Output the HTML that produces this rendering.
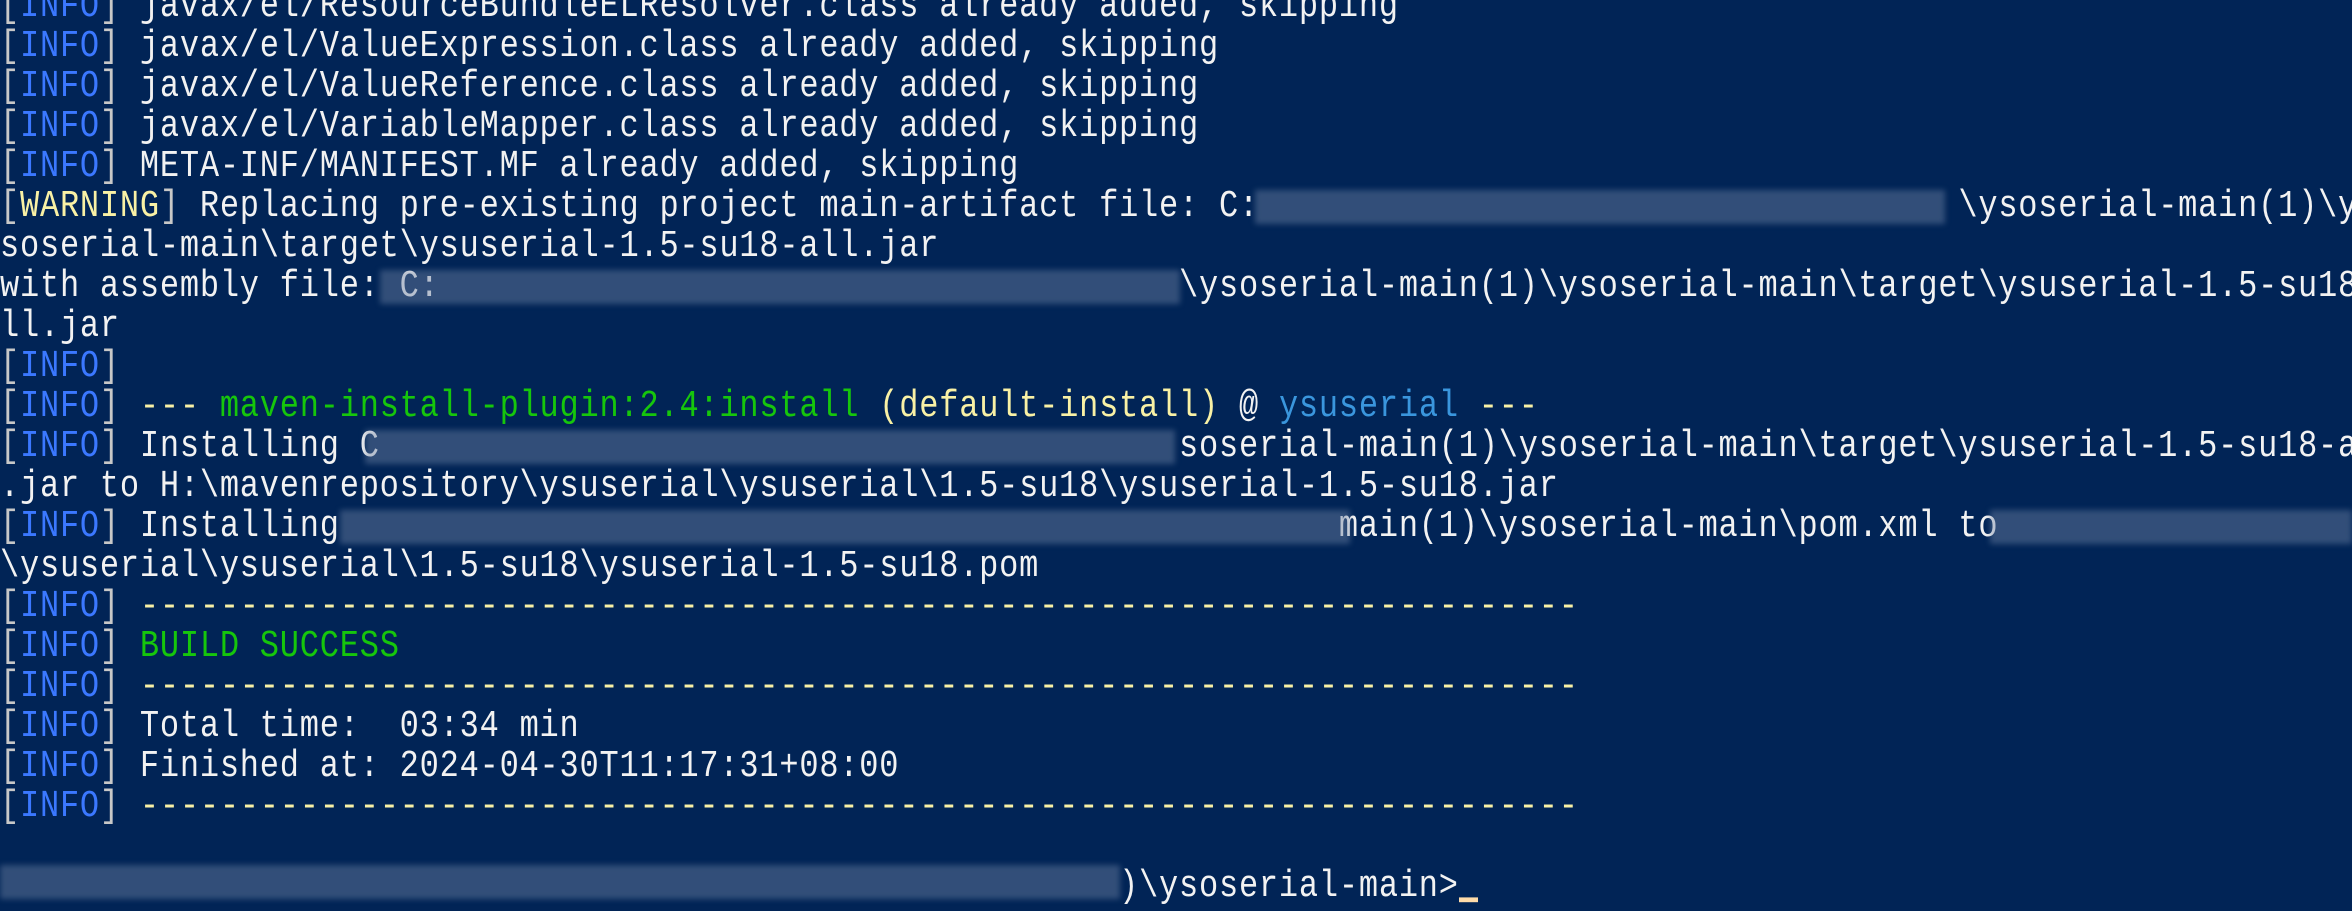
<!DOCTYPE html>
<html><head><meta charset="utf-8"><style>
html,body{margin:0;padding:0;background:#012456;width:2352px;height:903px;overflow:hidden}
#t{position:absolute;left:0;top:-13px;font-family:"Liberation Mono","Noto Sans CJK SC",monospace;font-size:32px;letter-spacing:0.78px;line-height:40px;color:#f2f2f2}
#t div{height:40px;white-space:pre;transform:scaleY(1.2);transform-origin:0 55%}
.b{color:#3b78ff}.k{color:#c8c8c8}.w{color:#f9f1a5}.g{color:#16c60c}.y{color:#f9f1a5}.c{color:#3a96dd}
.bl{position:absolute;background:rgba(110,130,165,0.45);filter:blur(3px)}
</style></head><body>
<div id="t"><div><span class="k">[</span><span class="b">INFO</span><span class="k">]</span> javax/el/ResourceBundleELResolver.class already added, skipping</div><div><span class="k">[</span><span class="b">INFO</span><span class="k">]</span> javax/el/ValueExpression.class already added, skipping</div><div><span class="k">[</span><span class="b">INFO</span><span class="k">]</span> javax/el/ValueReference.class already added, skipping</div><div><span class="k">[</span><span class="b">INFO</span><span class="k">]</span> javax/el/VariableMapper.class already added, skipping</div><div><span class="k">[</span><span class="b">INFO</span><span class="k">]</span> META-INF/MANIFEST.MF already added, skipping</div><div><span class="k">[</span><span class="w">WARNING</span><span class="k">]</span> Replacing pre-existing project main-artifact file: C:                                   \ysoserial-main(1)\y</div><div>soserial-main\target\ysuserial-1.5-su18-all.jar</div><div>with assembly file: C:                                     \ysoserial-main(1)\ysoserial-main\target\ysuserial-1.5-su18-a</div><div>ll.jar</div><div><span class="k">[</span><span class="b">INFO</span><span class="k">]</span></div><div><span class="k">[</span><span class="b">INFO</span><span class="k">]</span> <span class="y">---</span> <span class="g">maven-install-plugin:2.4:install</span> <span class="y">(default-install)</span> @ <span class="c">ysuserial</span> <span class="y">---</span></div><div><span class="k">[</span><span class="b">INFO</span><span class="k">]</span> Installing C                                        soserial-main(1)\ysoserial-main\target\ysuserial-1.5-su18-al</div><div>.jar to H:\mavenrepository\ysuserial\ysuserial\1.5-su18\ysuserial-1.5-su18.jar</div><div><span class="k">[</span><span class="b">INFO</span><span class="k">]</span> Installing                                                  main(1)\ysoserial-main\pom.xml to</div><div>\ysuserial\ysuserial\1.5-su18\ysuserial-1.5-su18.pom</div><div><span class="k">[</span><span class="b">INFO</span><span class="k">]</span> <span class="y">------------------------------------------------------------------------</span></div><div><span class="k">[</span><span class="b">INFO</span><span class="k">]</span> <span class="g">BUILD SUCCESS</span></div><div><span class="k">[</span><span class="b">INFO</span><span class="k">]</span> <span class="y">------------------------------------------------------------------------</span></div><div><span class="k">[</span><span class="b">INFO</span><span class="k">]</span> Total time:  03:34 min</div><div><span class="k">[</span><span class="b">INFO</span><span class="k">]</span> Finished at: 2024-04-30T11:17:31+08:00</div><div><span class="k">[</span><span class="b">INFO</span><span class="k">]</span> <span class="y">------------------------------------------------------------------------</span></div><div></div><div>                                                        )\ysoserial-main&gt;<span style="background:#fedba9;display:inline-block;width:19px;height:4px;vertical-align:-5px"></span></div></div>
<div class="bl" style="left:1255px;top:190px;width:690px;height:34px"></div>
<div class="bl" style="left:380px;top:270px;width:800px;height:34px"></div>
<div class="bl" style="left:365px;top:430px;width:810px;height:34px"></div>
<div class="bl" style="left:340px;top:510px;width:1010px;height:34px"></div>
<div class="bl" style="left:1990px;top:510px;width:362px;height:34px"></div>
<div class="bl" style="left:0px;top:865px;width:1120px;height:34px"></div>
</body></html>
